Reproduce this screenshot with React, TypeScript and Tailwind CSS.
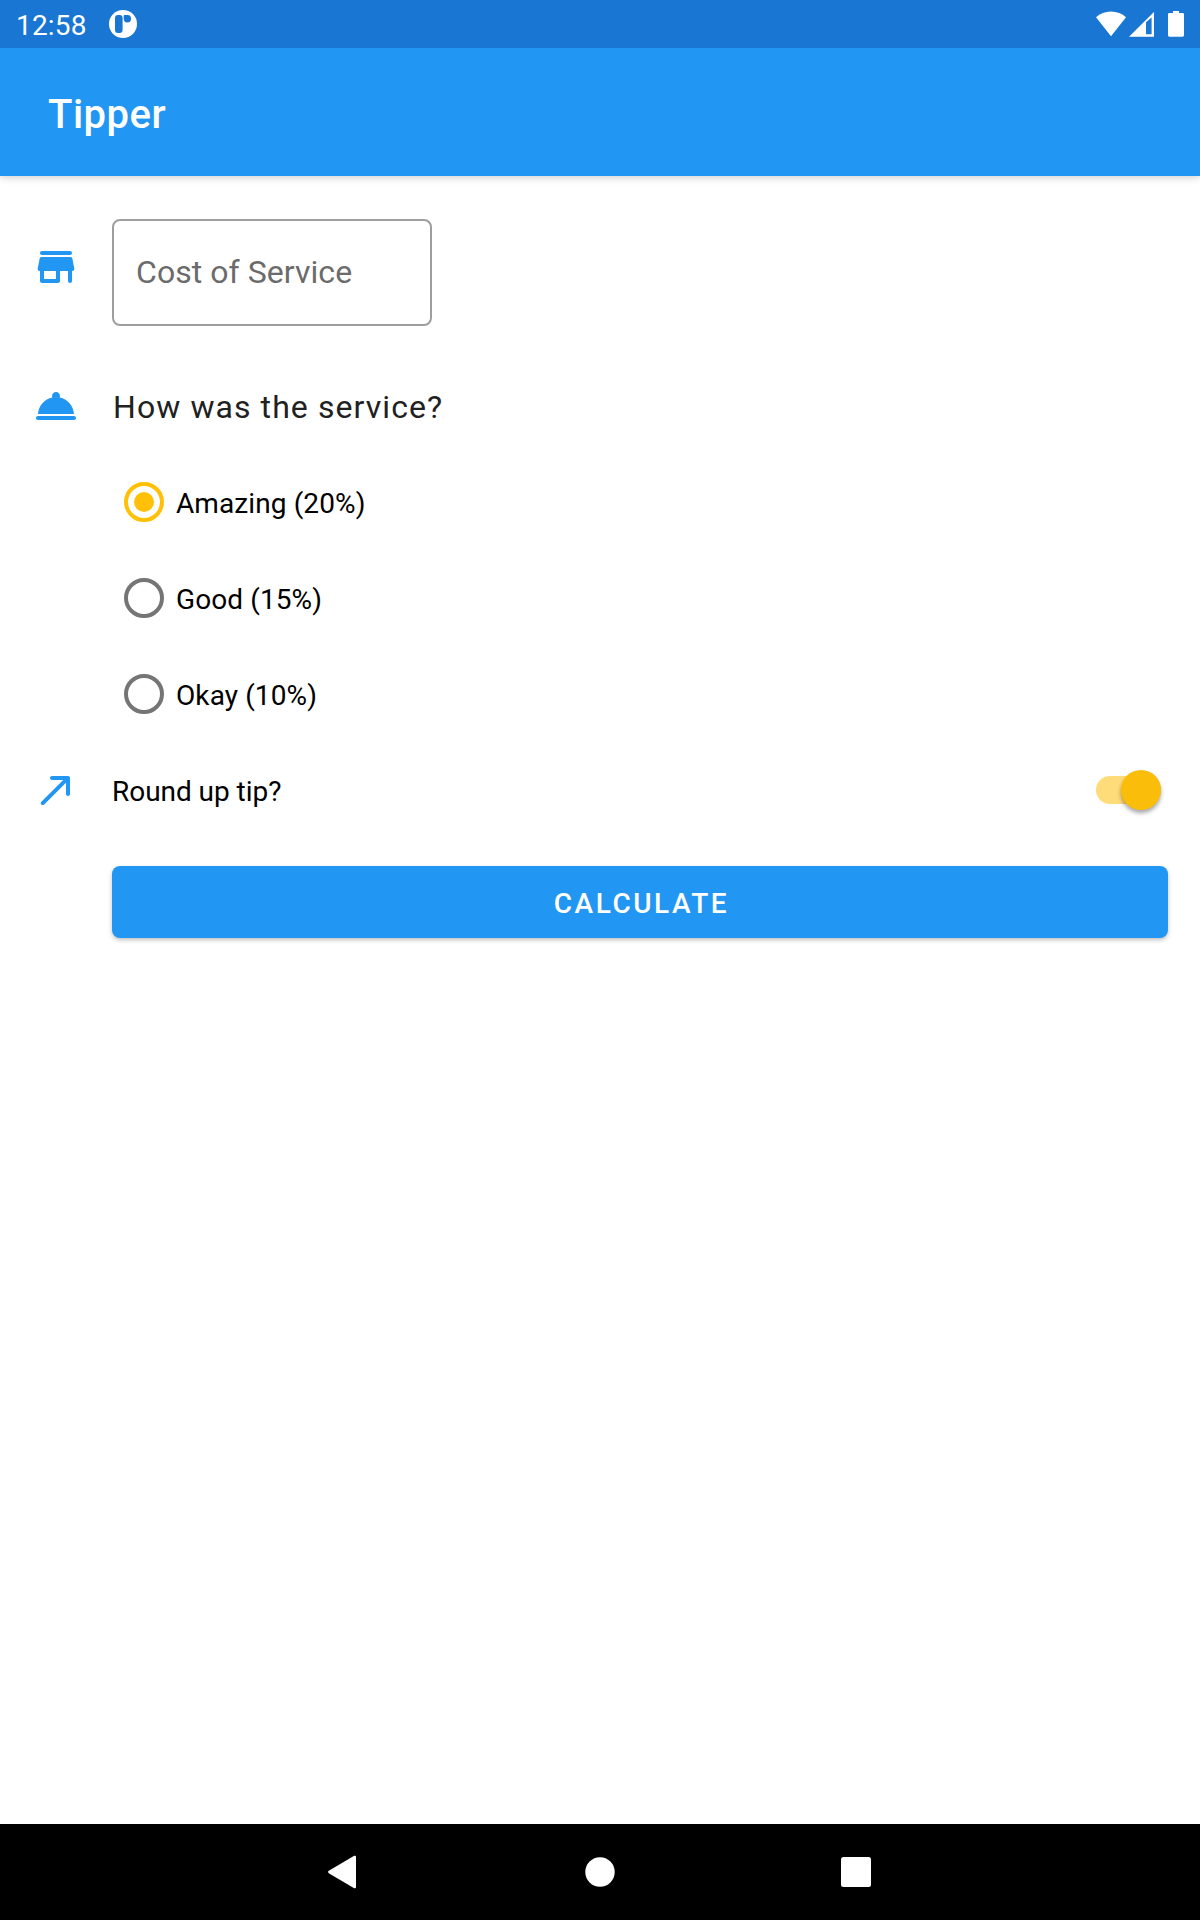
import React from "react";

const STORE =
  "M5 6h14c.55 0 1-.45 1-1s-.45-1-1-1H5c-.55 0-1 .45-1 1s.45 1 1 1zm15.16 1.8c-.09-.46-.5-.8-.98-.8H4.82c-.48 0-.89.34-.98.8l-1 5c-.12.62.35 1.2.98 1.2H4v5c0 .55.45 1 1 1h8c.55 0 1-.45 1-1v-5h4v5c0 .55.45 1 1 1s1-.45 1-1v-5h.18c.63 0 1.1-.58.98-1.2l-1-5zM12 18H6v-4h6v4z";
const ROOM_SERVICE =
  "M21 19H3c-.55 0-1-.45-1-1s.45-1 1-1h18c.55 0 1 .45 1 1s-.45 1-1 1zM13.84 7.79c.1-.24.16-.51.16-.79 0-1.1-.9-2-2-2s-2 .9-2 2c0 .28.06.55.16.79C6.25 8.6 3.27 11.93 3 16h18c-.27-4.07-3.25-7.4-7.16-8.21z";
const CALL_MADE =
  "M9 6c0 .56.45 1 1 1h5.59L4.7 17.89c-.39.39-.39 1.02 0 1.41.39.39 1.02.39 1.41 0L17 8.41V14c0 .55.45 1 1 1s1-.45 1-1V6c0-.55-.45-1-1-1h-8c-.55 0-1 .45-1 1z";

function Icon({ d, className = "" }: { d: string; className?: string }) {
  return (
    <svg viewBox="0 0 24 24" className={`size-12 shrink-0 fill-[#2196f3] ${className}`}>
      <path d={d} />
    </svg>
  );
}

function StatusBar() {
  return (
    <div className="relative flex h-12 items-center bg-[#1976d2] pl-4 pr-4 text-white">
      <span className="w-[93px] pt-1 text-[28px] leading-8 tracking-[0.2px]">12:58</span>
      <svg viewBox="0 0 28 28" className="size-7">
        <circle cx="14" cy="14" r="14" fill="#fff" />
        <rect x="6" y="5" width="7.6" height="18" rx="3" fill="#1976d2" />
        <path d="M15.6 5h3a3.7 3.7 0 1 1-3.9 4V6q0-1 .9-1z" fill="#1976d2" />
      </svg>
      <svg viewBox="0 0 90 28" className="ml-auto h-7 w-[90px]" fill="#fff">
        <path d="M2 7.2C6 3.5 11 1.4 17 1.4s11 2.1 15 5.8L17 26.2z" />
        <path fillRule="evenodd" d="M35 26.7 60 2v24.7zM52 12.3v11.9h5.6V7.4z" />
        <path d="M79 1h6v2h3.6q1.4 0 1.4 1.4v20.9q0 1.4-1.4 1.4H75.4q-1.4 0-1.4-1.4V4.4Q74 3 75.4 3H79z" />
      </svg>
    </div>
  );
}

function RadioRow({ label, checked }: { label: string; checked?: boolean }) {
  return (
    <label className="flex h-24 items-center">
      <span
        className={
          checked
            ? "flex size-10 items-center justify-center rounded-full border-4 border-[#ffc107]"
            : "flex size-10 items-center justify-center rounded-full border-4 border-[#757575]"
        }
      >
        {checked && <span className="size-5 rounded-full bg-[#ffc107]" />}
      </span>
      <span className="ml-3 pt-1 text-[28px] leading-8 tracking-[0.1px]">{label}</span>
    </label>
  );
}

export default function App() {
  return (
    <div className="flex h-[1920px] w-[1200px] flex-col overflow-hidden bg-white font-['Roboto',sans-serif] text-black">
      <StatusBar />
      <header className="flex h-32 items-center bg-[#2196f3] pl-12 pt-1.5 shadow-[0_1px_8px_rgba(0,0,0,0.22)]">
        <h1 className="text-[40px] font-medium leading-[48px] tracking-[0.5px] text-white">Tipper</h1>
      </header>

      <main className="flex flex-1 flex-col pl-8 pr-8">
        <div className="mt-[43px] flex h-[107px]">
          <Icon d={STORE} className="mt-6" />
          <div className="ml-8 flex w-80 items-center rounded-lg border-2 border-[#9e9e9e] pb-0.5 pl-[22px]">
            <span className="text-[32px] leading-10 tracking-[0.05px] text-[#6b6b6b]">Cost of Service</span>
          </div>
        </div>

        <div className="mt-14 flex h-12 items-center">
          <Icon d={ROOM_SERVICE} />
          <h2 className="ml-[33px] pt-0.5 text-[32px] leading-10 tracking-[1.08px] text-[#212121]">
            How was the service?
          </h2>
        </div>

        <div className="ml-[92px] mt-6 flex flex-col">
          <RadioRow label="Amazing (20%)" checked />
          <RadioRow label="Good (15%)" />
          <RadioRow label="Okay (10%)" />
        </div>

        <div className="mt-6 flex h-12 items-center">
          <Icon d={CALL_MADE} />
          <span className="ml-8 pt-1 text-[28px] leading-8 tracking-[-0.04px]">Round up tip?</span>
          <span className="ml-auto mr-[7px] flex h-7 w-[65px] items-center justify-end rounded-full bg-[#ffdc7a]">
            <span className="size-10 shrink-0 rounded-full bg-[#fabe0a] shadow-[0_3px_4px_rgba(0,0,0,0.35)]" />
          </span>
        </div>

        <button className="ml-20 mt-[52px] h-[72px] w-[1056px] rounded-lg bg-[#2196f3] pl-[3px] pt-1 text-[28px] font-medium leading-8 tracking-[2.5px] text-white shadow-[0_2px_4px_rgba(0,0,0,0.25)]">
          CALCULATE
        </button>
      </main>

      <nav className="flex h-24 items-center justify-center bg-black">
        <svg viewBox="0 0 544 34" className="h-[34px] w-[544px]" fill="#fff">
          <path d="M.8 15.8 26.2.8Q28 .2 28 2v30q0 1.8-1.8 1.2L.8 18.2Q-.6 17 .8 15.8z" />
          <circle cx="272" cy="17" r="14.7" />
          <rect x="513" y="2" width="30" height="30" rx="2.5" />
        </svg>
      </nav>
    </div>
  );
}
